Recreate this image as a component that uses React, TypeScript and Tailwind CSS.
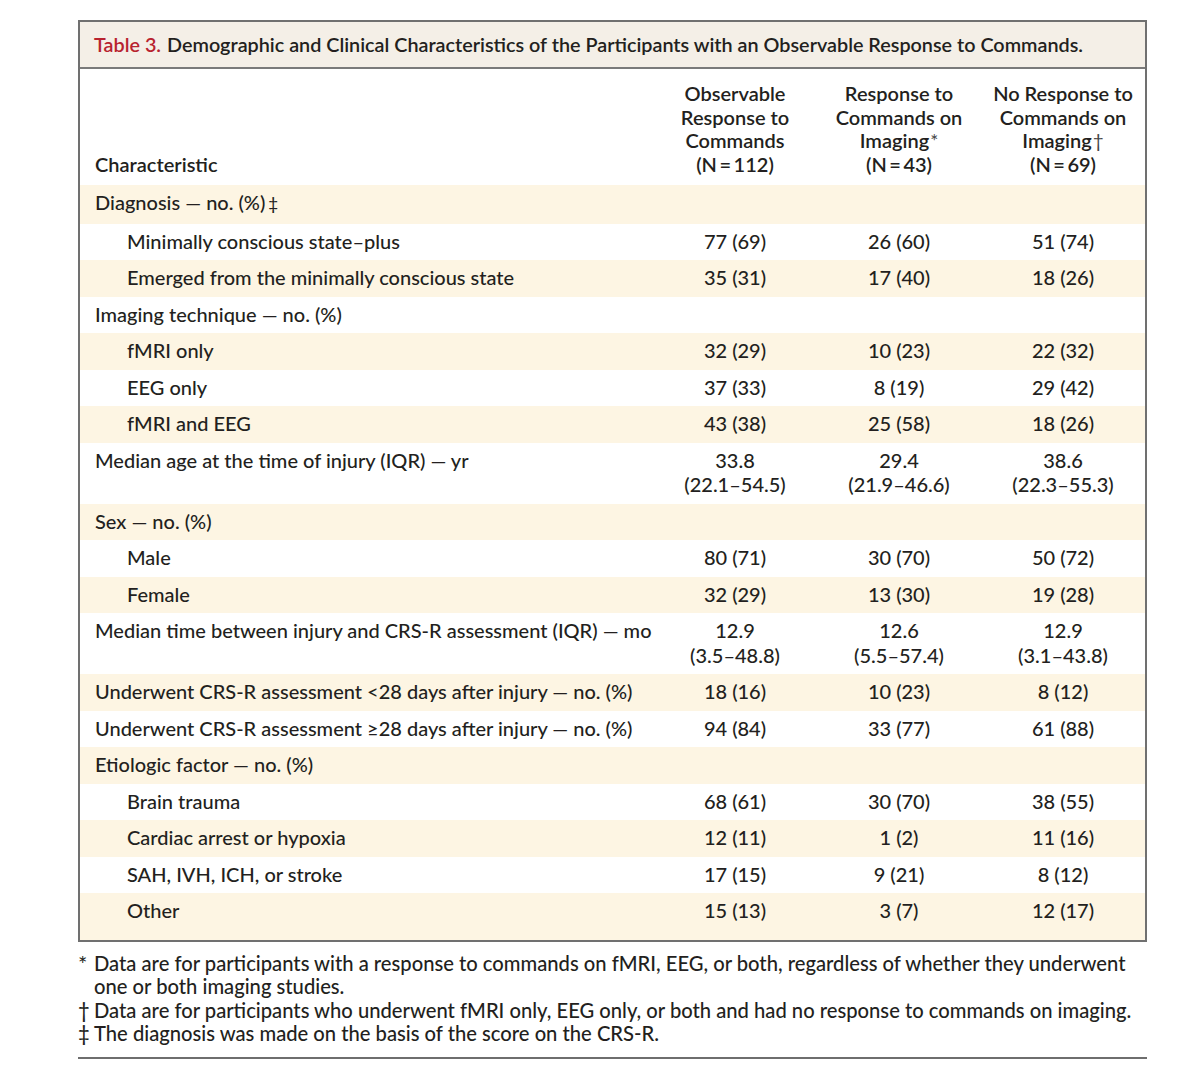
import React from 'react';

type Row = { label: string; mark?: string; cat?: boolean; v?: string[] };

const ROWS: Row[] = [
  { label: 'Diagnosis — no. (%)', mark: '‡', cat: true },
  { label: 'Minimally conscious state–plus', v: ['77 (69)', '26 (60)', '51 (74)'] },
  { label: 'Emerged from the minimally conscious state', v: ['35 (31)', '17 (40)', '18 (26)'] },
  { label: 'Imaging technique — no. (%)', cat: true },
  { label: 'fMRI only', v: ['32 (29)', '10 (23)', '22 (32)'] },
  { label: 'EEG only', v: ['37 (33)', '8 (19)', '29 (42)'] },
  { label: 'fMRI and EEG', v: ['43 (38)', '25 (58)', '18 (26)'] },
  { label: 'Median age at the time of injury (IQR) — yr', cat: true, v: ['33.8|(22.1–54.5)', '29.4|(21.9–46.6)', '38.6|(22.3–55.3)'] },
  { label: 'Sex — no. (%)', cat: true },
  { label: 'Male', v: ['80 (71)', '30 (70)', '50 (72)'] },
  { label: 'Female', v: ['32 (29)', '13 (30)', '19 (28)'] },
  { label: 'Median time between injury and CRS-R assessment (IQR) — mo', cat: true, v: ['12.9|(3.5–48.8)', '12.6|(5.5–57.4)', '12.9|(3.1–43.8)'] },
  { label: 'Underwent CRS-R assessment <28 days after injury — no. (%)', cat: true, v: ['18 (16)', '10 (23)', '8 (12)'] },
  { label: 'Underwent CRS-R assessment ≥28 days after injury — no. (%)', cat: true, v: ['94 (84)', '33 (77)', '61 (88)'] },
  { label: 'Etiologic factor — no. (%)', cat: true },
  { label: 'Brain trauma', v: ['68 (61)', '30 (70)', '38 (55)'] },
  { label: 'Cardiac arrest or hypoxia', v: ['12 (11)', '1 (2)', '11 (16)'] },
  { label: 'SAH, IVH, ICH, or stroke', v: ['17 (15)', '9 (21)', '8 (12)'] },
  { label: 'Other', v: ['15 (13)', '3 (7)', '12 (17)'] },
];

const HEADS = [
  { lines: ['Observable', 'Response to', 'Commands'], n: '112' },
  { lines: ['Response to', 'Commands on', 'Imaging'], mark: '*', n: '43' },
  { lines: ['No Response to', 'Commands on', 'Imaging'], mark: '†', n: '69' },
];

export default function App() {
  return (
    <div className="min-h-screen bg-white text-[#231f20] font-['Lato','Liberation_Sans',sans-serif]">
      <div className="ml-[78px] w-[1069px] pt-[20px]">
        {/* Table box */}
        <div className="border-2 border-[#707070]">
          <div className="bg-[#f4efe7] border-b-2 border-[#7a7a7a] h-[47px] flex items-center pl-[14px] text-[19.8px] font-semibold">
            <span className="text-[#b8232f]">Table 3.</span>
            <span className="ml-[6px]">Demographic and Clinical Characteristics of the Participants with an Observable Response to Commands.</span>
          </div>

          {/* Column heads */}
          <div className="flex items-end h-[116px] pb-[9px] text-[20px] leading-[23.5px] font-semibold">
            <div className="flex-1 pl-[15px]">Characteristic</div>
            {HEADS.map((h, i) => (
              <div key={i} className="w-[164px] text-center">
                {h.lines.map((l, j) => (
                  <div key={j}>
                    {l}
                    {j === 2 && h.mark && <span className="text-[19px] font-normal ml-[1px] text-[#444]">{h.mark}</span>}
                  </div>
                ))}
                <div>(N{'\u2009'}={'\u2009'}{h.n})</div>
              </div>
            ))}
          </div>

          {/* Body rows */}
          {ROWS.map((r, i) => {
            const last = i === ROWS.length - 1;
            return (
              <div
                key={i}
                className={`flex items-start pt-[5px] text-[20px] leading-[24.5px] font-medium ${i % 2 === 0 ? 'bg-[#fdf5e3]' : 'bg-white'} ${last ? 'pb-[17px]' : 'pb-[7px]'}`}
              >
                <div className={`flex-1 ${r.cat ? 'pl-[15px]' : 'pl-[47px]'}`}>
                  {r.label}
                  {r.mark && <span className="ml-[3px] text-[17px]">{r.mark}</span>}
                </div>
                {[0, 1, 2].map((c) => (
                  <div key={c} className="w-[164px] text-center">
                    {r.v
                      ? r.v[c].split('|').map((t, k) => <div key={k}>{t}</div>)
                      : '\u00a0'}
                  </div>
                ))}
              </div>
            );
          })}
        </div>

        {/* Footnotes */}
        <div className="mt-[10px] text-[20.2px] leading-[23.5px] font-medium whitespace-nowrap">
          <div className="flex">
            <span className="w-[16px] shrink-0 text-[22px] leading-[23.5px] font-normal">*</span>
            <span>
              Data are for participants with a response to commands on fMRI, EEG, or both, regardless of whether they underwent
              <br />
              one or both imaging studies.
            </span>
          </div>
          <div className="flex">
            <span className="w-[16px] shrink-0">†</span>
            <span>Data are for participants who underwent fMRI only, EEG only, or both and had no response to commands on imaging.</span>
          </div>
          <div className="flex">
            <span className="w-[16px] shrink-0">‡</span>
            <span>The diagnosis was made on the basis of the score on the CRS-R.</span>
          </div>
        </div>
        <div className="mt-[11px] h-[2px] bg-[#6e6e6e]" />
      </div>
    </div>
  );
}
